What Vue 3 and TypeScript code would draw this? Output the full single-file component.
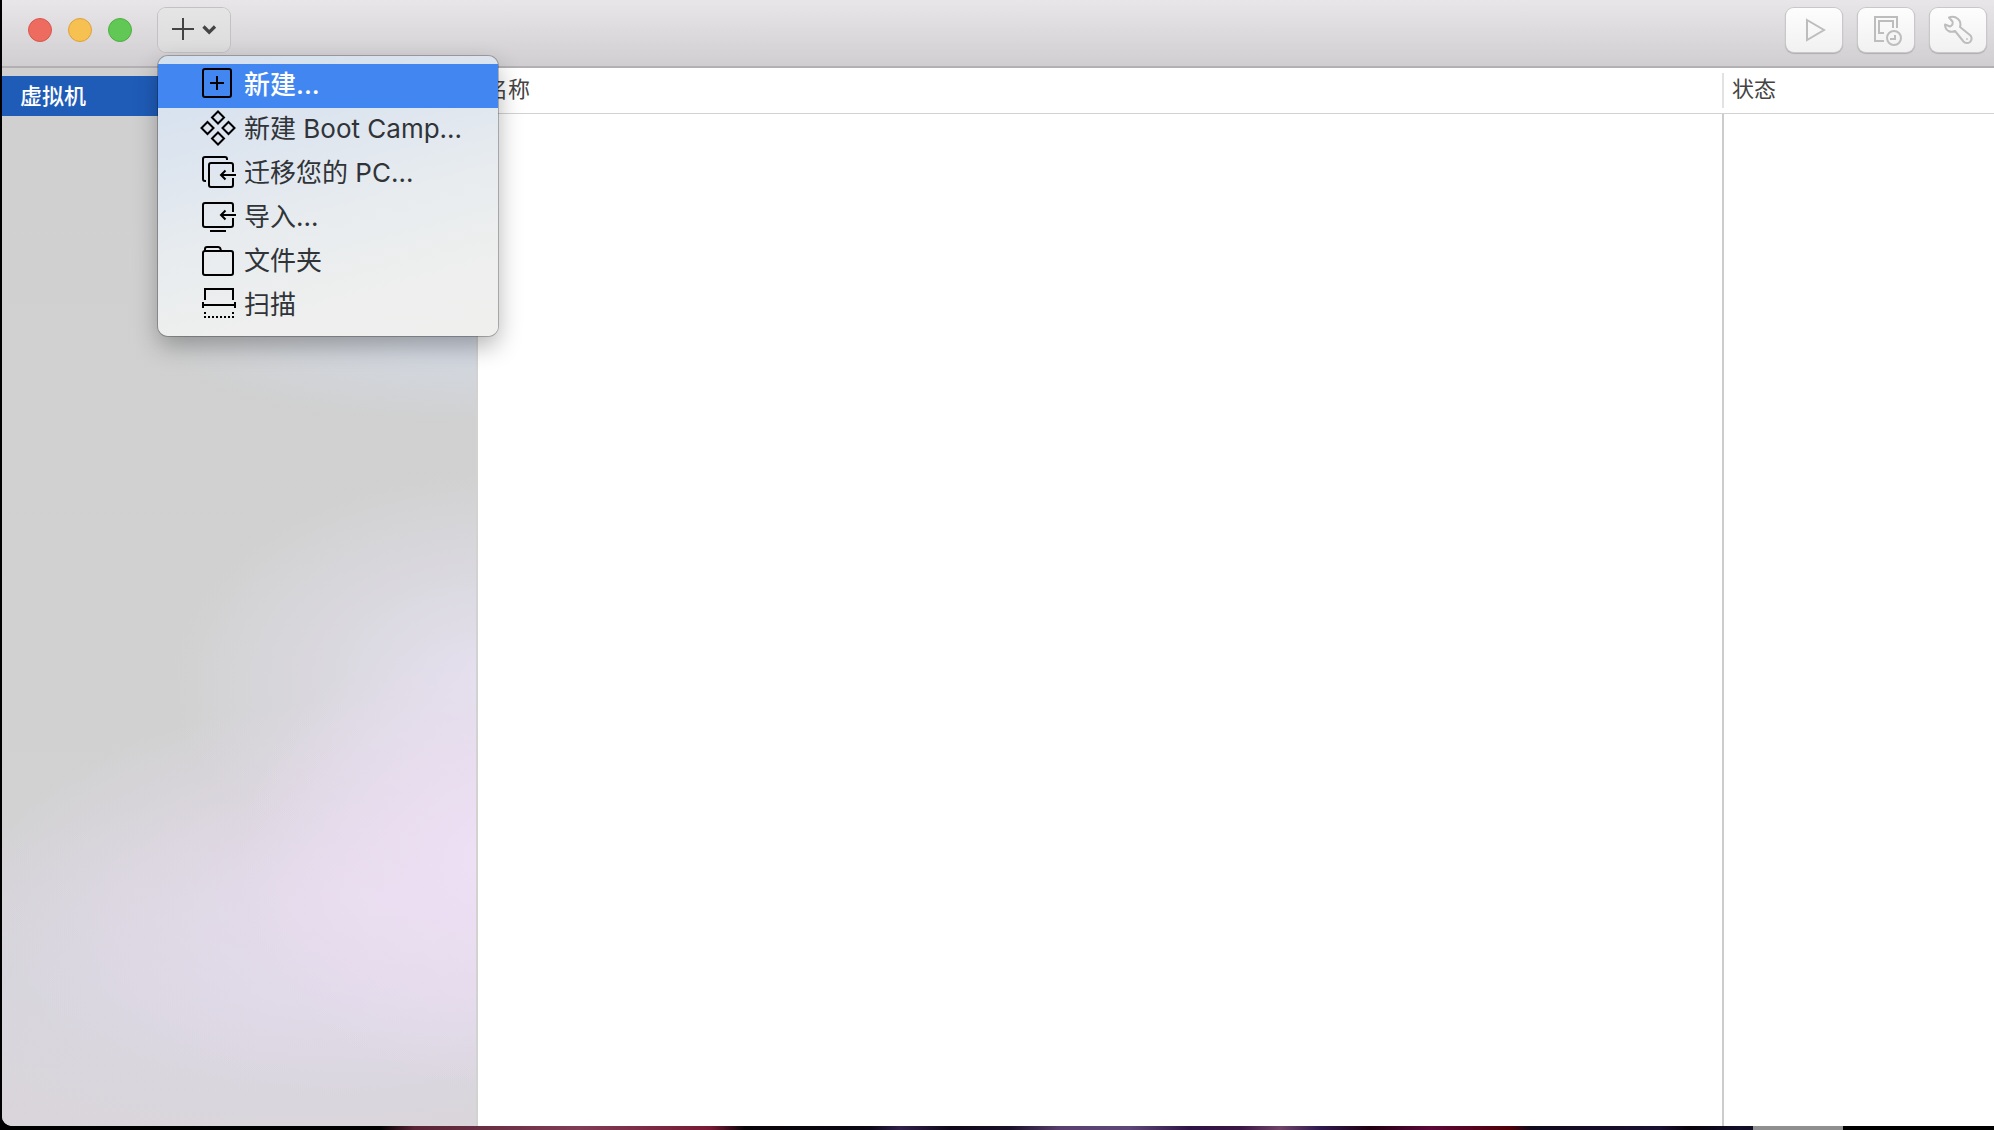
<script setup lang="ts">
import { ref } from 'vue'

interface MenuEntry {
  id: string
  label: string
  paths: string[]
}

const entries: MenuEntry[] = [
  {
    id: 'new',
    label: '新建...',
    paths: ['M5 5H29Q31 5 31 7V31Q31 33 29 33H5Q3 33 3 31V7Q3 5 5 5Z', 'M17 12V26M10 19H24'],
  },
  {
    id: 'bootcamp',
    label: '新建 Boot Camp...',
    paths: [
      'M18 3.5L24 9.500L18 15.500L12 9.500Z',
      'M18 24.500L24 30.500L18 36.500L12 30.500Z',
      'M7.500 14L13.500 20L7.500 26L1.500 20Z',
      'M28.500 14L34.500 20L28.500 26L22.500 20Z',
    ],
  },
  {
    id: 'migrate',
    label: '迁移您的 PC...',
    paths: [
      'M27 8V7Q27 5 25 5H5Q3 5 3 7V27Q3 29 5 29H6',
      'M33 20V13Q33 11 31 11H11Q9 11 9 13V33Q9 35 11 35H31Q33 35 33 33V26',
      'M36 23H21M25.5 18.5L21 23L25.5 27.5',
    ],
  },
  {
    id: 'import',
    label: '导入...',
    paths: [
      'M33 16V9Q33 7 31 7H5Q3 7 3 9V29Q3 31 5 31H31Q33 31 33 29V22',
      'M36 19H21M25.5 14.5L21 19L25.5 23.5',
      'M10 35H26',
    ],
  },
  {
    id: 'folder',
    label: '文件夹',
    paths: [
      'M5 11H31Q33 11 33 13V33Q33 35 31 35H5Q3 35 3 33V13Q3 11 5 11Z',
      'M5 11V9Q5 7 7 7H18Q20 7 20.5 9L21 11',
    ],
  },
  {
    id: 'scan',
    label: '扫描',
    paths: [
      'M5 16V5H33V16',
      'M3 21H35M3 18V24M35 18V24',
      'M4 29H6M32 29H34M4 33H6M8 33H10M12 33H14M16 33H18M20 33H22M24 33H26M28 33H30M32 33H34',
    ],
  },
]

const active = ref('new')
</script>

<template>
  <div class="desktop">
    <div class="window">
      <header class="toolbar">
        <div class="lights">
          <button class="light close" aria-label="关闭"></button>
          <button class="light minimize" aria-label="最小化"></button>
          <button class="light zoom" aria-label="缩放"></button>
        </div>
        <div class="add">
          <button class="tool add-button" aria-label="新建" aria-haspopup="menu" aria-expanded="true">
            <svg width="72" height="44" viewBox="0 0 72 44" fill="none" stroke="#444">
              <path d="M25 10V32M14 21H36" stroke-width="2" />
              <path d="M45.5 18.5L51.2 24.2L57 18.500" stroke-width="3.2" />
            </svg>
          </button>
          <ul class="menu" role="menu">
            <li v-for="entry in entries" :key="entry.id" role="none">
              <button
                class="entry"
                :class="{ active: entry.id === active }"
                role="menuitem"
                @mouseenter="active = entry.id"
              >
                <svg width="36" height="44" viewBox="0 0 36 44" fill="none" stroke="#000" stroke-width="2">
                  <path v-for="d in entry.paths" :key="d" :d="d" />
                </svg>
                <span>{{ entry.label }}</span>
              </button>
            </li>
          </ul>
        </div>
        <div class="actions">
          <button class="tool" aria-label="启动" disabled>
            <svg width="56" height="44" viewBox="0 0 56 44" fill="none" stroke="#bdbdbd" stroke-width="2">
              <path d="M21 12L38 22L21 32Z" />
            </svg>
          </button>
          <button class="tool" aria-label="快照" disabled>
            <svg width="56" height="44" viewBox="0 0 56 44" fill="none" stroke="#bdbdbd" stroke-width="2">
              <path d="M39 20V9H17V33H26" />
              <path d="M35 20V13H21V25H26" />
              <circle cx="36" cy="30" r="7" />
              <path d="M37 27V31H32" />
            </svg>
          </button>
          <button class="tool" aria-label="设置" disabled>
            <svg width="56" height="44" viewBox="0 0 56 44" fill="none" stroke="#bdbdbd" stroke-width="2" stroke-linejoin="round">
              <path d="M19 9.500L22.500 13.500Q23.500 17 20 18.500L15 16.500Q15 21 18.500 23Q21.500 24.500 25 23L33.500 33.500A4.600 4.600 0 0 0 40.500 27.500L30 19Q31.500 14 28 11Q24 7.500 19 9.500Z" />
              <circle cx="37" cy="31" r="0.5" stroke-width="1" />
            </svg>
          </button>
        </div>
      </header>
      <div class="body">
        <nav class="sidebar">
          <a class="source" href="#">虚拟机</a>
        </nav>
        <main class="content">
          <table class="list">
            <thead>
              <tr>
                <th scope="col">名称</th>
                <th scope="col" class="status">状态</th>
              </tr>
            </thead>
            <tbody>
              <tr>
                <td></td>
                <td class="status"></td>
              </tr>
            </tbody>
          </table>
        </main>
      </div>
    </div>
  </div>
</template>

<style>
body {
  margin: 0;
  background: #000;
}
</style>

<style scoped>
.desktop {
  box-sizing: border-box;
  display: flex;
  min-height: 100vh;
  padding: 0 0 4px 2px;
  font-family: Inter, 'Noto Sans CJK SC', sans-serif;
  background:
    linear-gradient(#8f8f8f, #8f8f8f) 1753px 100% / 90px 4px no-repeat,
    linear-gradient(
        90deg,
        #000 380px,
        #5a2436 415px,
        #803c55 580px,
        #781a35 710px,
        #080408 745px,
        #0c0814 870px,
        #30204a 900px,
        #100818 950px,
        #1a1028 1010px,
        #58406e 1060px,
        #5c4878 1130px,
        #2e1444 1190px,
        #3a1644 1240px,
        #704468 1280px,
        #2e1a4e 1320px,
        #200010 1370px,
        #5c0838 1430px,
        #500008 1510px,
        #100a1c 1530px,
        #1a1030 1660px,
        #08030c 1690px,
        #140f28 1740px,
        #000 1845px
      )
      0 100% / 100% 4px no-repeat,
    #000;
}

.window {
  flex: 1;
  display: flex;
  flex-direction: column;
  overflow: hidden;
  border-bottom-left-radius: 10px;
  background: #fff;
}

.toolbar {
  display: flex;
  align-items: flex-start;
  height: 66px;
  padding: 0 8px 0 26px;
  border-bottom: 2px solid #b2b0b2;
  background: linear-gradient(#e8e6e9, #d0ced0);
}

.lights {
  display: flex;
  gap: 16px;
  width: 130px;
  padding-top: 18px;
}

.light {
  width: 24px;
  height: 24px;
  padding: 0;
  border: 1px solid;
  border-radius: 50%;
}

.close {
  border-color: #d9564c;
  background: #ee6b60;
}

.minimize {
  border-color: #dca23c;
  background: #f6c151;
}

.zoom {
  border-color: #4fae42;
  background: #62c855;
}

.tool {
  display: block;
  height: 44px;
  padding: 0;
  border: 0;
  border-radius: 8px;
  background: linear-gradient(#fdfdfd, #f1f1f1);
  box-shadow:
    0 0 0 1px #c9c7c9,
    0 1px 1px 1px #b0aeb0;
}

.tool svg {
  display: block;
}

.add {
  position: relative;
  padding-top: 8px;
}

.add-button {
  background: linear-gradient(#e6e5e6, #dddcdd);
  box-shadow: 0 0 0 1px #c3c1c3;
}

.actions {
  display: flex;
  gap: 16px;
  margin-left: auto;
  padding-top: 8px;
}

.menu {
  position: absolute;
  z-index: 2;
  top: 56px;
  left: 0;
  width: 340px;
  margin: 0;
  padding: 8px 0;
  list-style: none;
  border-radius: 10px;
  background: linear-gradient(165deg, #d3e0ef 0%, #dde5ef 30%, #e8ecef 55%, #eeefee 80%, #efefee 100%);
  box-shadow:
    0 0 0 1px rgba(0, 0, 0, 0.24),
    0 10px 24px rgba(0, 0, 0, 0.3);
}

.entry {
  display: flex;
  align-items: flex-start;
  gap: 8px;
  width: 100%;
  height: 44px;
  padding: 0 0 0 42px;
  border: 0;
  background: none;
  color: #303438;
  font-family: inherit;
  font-size: 26px;
  line-height: 42px;
  text-align: left;
  white-space: nowrap;
}

.entry.active {
  background: #4287f1;
  color: #fff;
  font-weight: 500;
}

.body {
  flex: 1;
  display: flex;
}

.sidebar {
  width: 474px;
  padding-top: 8px;
  border-right: 2px solid #d2d3d1;
  background:
    radial-gradient(ellipse 330px 90px at 100% 265px, #d4dae6, rgba(212, 218, 230, 0)),
    radial-gradient(ellipse 260px 230px at 105% 790px, #eddff4 10%, rgba(237, 223, 244, 0)),
    radial-gradient(ellipse 400px 200px at 80% 830px, rgba(234, 221, 241, 0.85), rgba(234, 221, 241, 0)),
    radial-gradient(ellipse 520px 200px at 60% 930px, rgba(222, 218, 234, 0.7), rgba(222, 218, 234, 0)),
    radial-gradient(ellipse 330px 210px at 105% 610px, #e4e0ee, rgba(228, 224, 238, 0)),
    linear-gradient(#cfd0cf 0%, #d1d1d1 60%, #d4d3d6 85%, #d8d4d7 100%);
}

.source {
  display: block;
  padding-left: 18px;
  background: #1f5cb8;
  color: #fff;
  font-size: 22px;
  font-weight: 500;
  line-height: 40px;
  text-decoration: none;
}

.content {
  flex: 1;
  display: grid;
}

.list {
  width: 100%;
  height: 100%;
  table-layout: fixed;
  border-collapse: separate;
  border-spacing: 0;
}

.list th {
  height: 45px;
  padding: 0 8px;
  border-bottom: 1px solid #d2d2d2;
  color: #444;
  font-size: 22px;
  font-weight: 400;
  line-height: 42px;
  text-align: left;
  vertical-align: top;
}

.list td {
  padding: 0;
}

.list .status {
  width: 272px;
  box-sizing: border-box;
}

.list th.status {
  padding-left: 10px;
  background: linear-gradient(#e2e2e2, #e2e2e2) 0 5px / 2px 35px no-repeat;
}

.list td.status {
  height: 100%;
  border-left: 2px solid #ccc;
}
</style>
